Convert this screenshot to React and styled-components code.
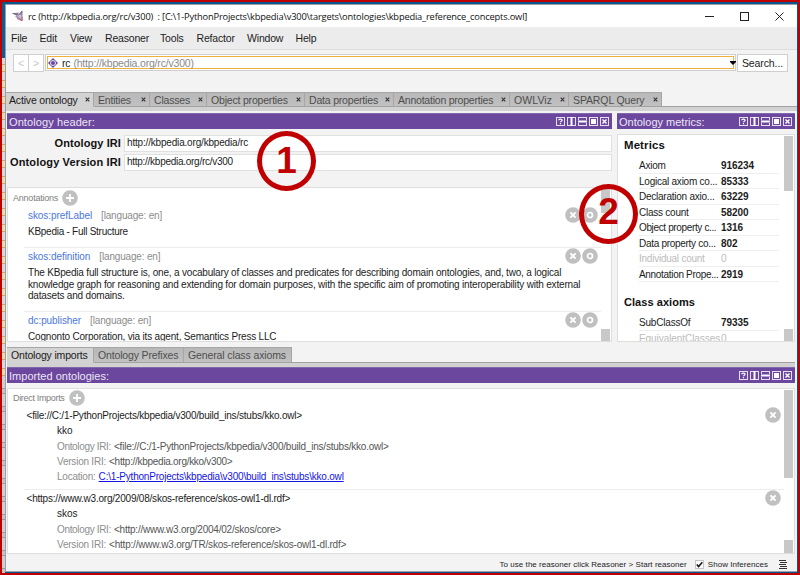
import React from "react";
import styled, { createGlobalStyle } from "styled-components";

const Global = createGlobalStyle`
  * { box-sizing: border-box; }
  body { margin: 0; font-family: "Liberation Sans", Arial, sans-serif; color: #1c1c1c; }
`;

const Frame = styled.div`
  position: relative;
  width: 800px;
  height: 575px;
  overflow: hidden;
  border: 2px solid #c00000;
  background: #0c548c;
  padding-top: 2px;
  display: flex;
`;
const Desktop = styled.div`
  width: 3px;
  height: 569px;
  display: flex;
  flex-direction: column;
`;
const DesktopBlue = styled.div`
  height: 54px;
  background: #0d5c96;
`;
const DesktopIcons = styled.div`
  height: 318px;
  background: repeating-linear-gradient(#dcdad6 0 6px, #c8aa74 6px 7px, #ecdcae 7px 13px, #cfa558 13px 14px, #d8d8d8 14px 16px);
`;
const DesktopText = styled.div`
  flex: 1;
  background: repeating-linear-gradient(#cfcfcf 0 12px, #9a9a9a 12px 13px, #c4c4c4 13px 17px, #999 17px 18px);
`;
const Window = styled.div`
  width: 792px;
  height: 568px;
  background: #f3f3f3;
  border: 1px solid #9aa0a8;
  border-right: 0;
  display: flex;
  flex-direction: column;
`;

const TitleBar = styled.div`
  height: 22px;
  background: #fff;
  display: flex;
  align-items: center;
  padding: 0 13px 0 6px;
`;
const TitleText = styled.div`
  font: 9.3px "Open Sans", sans-serif;
  letter-spacing: -0.18px;
  margin-left: 4px;
  white-space: pre;
  color: #111;
`;
const WindowButtons = styled.div`
  margin-left: auto;
  display: flex;
  gap: 26px;
`;
const MenuBar = styled.div`
  height: 23px;
  background: #ececec;
  border-bottom: 1px solid #dcdcdc;
  display: flex;
  align-items: center;
  padding-left: 5px;
`;
const MenuItem = styled.div`
  width: ${(p) => p.$w}px;
  font-size: 10.5px;
  letter-spacing: -0.18px;
  white-space: nowrap;
`;
const Toolbar = styled.div`
  height: 42px;
  padding: 4px 8px 0 7px;
  display: flex;
`;
const NavButton = styled.div`
  width: ${(p) => p.$w || 16}px;
  height: 18px;
  margin-right: ${(p) => p.$mr || 0}px;
  background: #fff;
  border: 1px solid #cfcfcf;
  color: ${(p) => (p.$dark ? "#222" : "#c8c8c8")};
  display: flex;
  align-items: center;
  justify-content: center;
  font-size: 10.5px;
  letter-spacing: -0.1px;
  & + & { margin-left: -1px; }
`;
const Combo = styled.div`
  width: 691px;
  height: 17px;
  margin-right: 1px;
  padding: 1px;
  background: #fff;
  border: 1px solid #cfcfcf;
`;
const ComboField = styled.div`
  width: 687px;
  height: 13px;
  border: 1px solid #f0b13c;
  display: flex;
  align-items: center;
  font-size: 10.5px;
  letter-spacing: -0.18px;
  color: #8a8a8a;
  b { font-weight: 400; color: #222; margin: 0 3px 0 4px; }
  svg:last-child { margin-left: auto; margin-right: -3px; }
`;

const TabStrip = styled.div`
  display: flex;
  height: ${(p) => p.$h}px;
  border-bottom: 4px solid #d2d2d2;
  position: relative;
`;
const TabRest = styled.div`
  flex: 1;
  border-bottom: 1px solid #a2a2a2;
`;
const TabBox = styled.div`
  width: ${(p) => p.$w}px;
  display: flex;
  align-items: center;
  justify-content: space-between;
  padding: 0 3px 0 ${(p) => p.$pl || 4}px;
  font-size: 10.5px;
  letter-spacing: ${(p) => (p.$ls || 0) - 0.22}px;
  white-space: nowrap;
  background: ${(p) => (p.$active ? "#d3d3d3" : "linear-gradient(#b8b8b8, #c1c1c1)")};
  color: ${(p) => (p.$active ? "#1a1a1a" : "#4e4e4e")};
  border: 1px solid #a6a6a6;
  border-left-width: 0;
  border-bottom-color: ${(p) => (p.$active ? "#d3d3d3" : "#a2a2a2")};
`;

const Main = styled.div`
  display: flex;
  gap: 5px;
  padding: 2px 0 0 1px;
  height: 231px;
`;
const Column = styled.div`
  width: ${(p) => p.$w}px;
  display: flex;
  flex-direction: column;
`;
const PanelHeader = styled.div`
  height: 16px;
  flex: none;
  background: #6b479e;
  border-top: 1px solid #8266ae;
  color: #ece6f5;
  font-size: 11px;
  letter-spacing: ${(p) => p.$ls || 0}px;
  display: flex;
  align-items: center;
  justify-content: space-between;
  padding: 0 3px 0 2px;
  white-space: nowrap;
`;
const HeaderButtons = styled.div`
  display: flex;
  gap: 2px;
`;
const IriForm = styled.div`
  height: 58px;
  padding-top: 5px;
  display: flex;
  flex-direction: column;
  gap: 1px;
`;
const IriRow = styled.div`
  display: flex;
  height: 18px;
  align-items: center;
`;
const IriLabel = styled.div`
  width: 114px;
  margin-right: 3px;
  text-align: right;
  font-size: 11px;
  font-weight: 700;
  letter-spacing: ${(p) => p.$ls}px;
  white-space: nowrap;
  color: #111;
`;
const IriInput = styled.div`
  flex: 1;
  height: 17px;
  line-height: 14px;
  border: 1px solid #e0e0e0;
  background: #fff;
  padding-left: 2px;
  font-size: 10px;
  letter-spacing: ${(p) => p.$ls - 0.22}px;
`;

const ScrollBox = styled.div`
  height: ${(p) => p.$h}px;
  flex: none;
  background: #fff;
  border: 1px solid #dedede;
  display: flex;
  overflow: hidden;
`;
const ScrollContent = styled.div`
  flex: 1;
  min-width: 0;
  overflow: hidden;
`;
const ScrollBar = styled.div`
  width: 10px;
  padding-top: 1px;
  display: flex;
  flex-direction: column;
  justify-content: space-between;
`;
const Thumb = styled.div`
  width: 9px;
  height: ${(p) => p.$h}px;
  background: #c8c8c8;
`;
const SectionLabel = styled.div`
  height: ${(p) => p.$h}px;
  margin-left: 5px;
  display: flex;
  align-items: center;
  gap: 4px;
  font-size: 9px;
  letter-spacing: ${(p) => (p.$ls || 0) - 0.22}px;
  color: #808080;
  svg { flex: none; }
`;
const Annotation = styled.div`
  height: ${(p) => p.$h}px;
  margin: 0 0 0 16px;
  padding-left: 4px;
  border-bottom: 1px solid #ededed;
`;
const AnnotationHead = styled.div`
  height: 16px;
  display: flex;
  align-items: center;
  font-size: 10px;
  white-space: nowrap;
`;
const Property = styled.span`
  color: #4c77e0;
  letter-spacing: -0.07px;
`;
const Lang = styled.span`
  color: #8c8c8c;
  margin-left: 9px;
  letter-spacing: -0.17px;
`;
const Actions = styled.div`
  margin-left: auto;
  margin-right: ${(p) => p.$mr}px;
  display: flex;
  gap: 1px;
`;
const Value = styled.div`
  margin-top: 3px;
  font-size: 10px;
  line-height: 11.65px;
  letter-spacing: ${(p) => (p.$ls || 0) - 0.22}px;
  white-space: pre;
`;

const MetricTitle = styled.div`
  height: 21px;
  line-height: 21px;
  margin: ${(p) => p.$mt || 0}px 0 2px 6px;
  font-size: ${(p) => p.$fs || 11}px;
  font-weight: 700;
  letter-spacing: ${(p) => p.$ls}px;
  color: #111;
`;
const MetricRow = styled.div`
  display: flex;
  height: 15.55px;
  line-height: 15.5px;
  width: 140px;
  margin-left: 21px;
  border-bottom: 1px solid #efefef;
  font-size: 10px;
  white-space: nowrap;
  color: ${(p) => (p.$off ? "#bcbcbc" : "#1c1c1c")};
`;
const MetricName = styled.div`
  width: 82px;
  letter-spacing: ${(p) => (p.$ls || 0) - 0.24}px;
`;
const MetricValue = styled.div`
  font-weight: ${(p) => (p.$off ? 400 : 700)};
  letter-spacing: -0.05px;
`;

const Imports = styled.div`
  padding-left: 1px;
  display: flex;
  flex-direction: column;
  width: 789px;
`;
const Gap = styled.div`
  height: 5px;
`;
const ImportItem = styled.div`
  height: 83px;
  margin-left: 16px;
  border-bottom: 1px solid #ededed;
  font-size: 10px;
  letter-spacing: -0.21px;
  white-space: nowrap;
`;
const ImportHead = styled.div`
  height: 16px;
  padding-left: 2.5px;
  display: flex;
  align-items: center;
`;
const ImportName = styled.div`
  height: 16px;
  line-height: 15px;
  padding-left: 33px;
  letter-spacing: 0;
`;
const ImportFact = styled.div`
  height: 15px;
  line-height: 15px;
  padding-left: 33px;
  display: flex;
  gap: 3px;
  color: #555;
`;
const FactLabel = styled.span`
  color: #8e8e8e;
  letter-spacing: ${(p) => (p.$ls || 0) - 0.22}px;
`;
const FactValue = styled.span`
  letter-spacing: ${(p) => (p.$ls || 0) - 0.22}px;
`;
const FileLink = styled.a`
  color: #1414e6;
  letter-spacing: -0.2px;
  text-decoration: underline;
`;

const StatusBar = styled.div`
  flex: 1;
  display: flex;
  align-items: center;
  justify-content: flex-end;
  padding-right: 10px;
  padding-top: 3px;
  font-size: 8px;
  letter-spacing: 0.04px;
  white-space: nowrap;
`;
const CheckBox = styled.div`
  width: 9px;
  height: 9px;
  margin: 0 4px 0 8px;
  background: #fff;
  border: 1px solid #c4c4c4;
  display: flex;
`;
const StatusText = styled.span`
  margin-right: ${(p) => p.$mr || 0}px;
`;

const Callout = styled.div`
  position: absolute;
  left: ${(p) => p.$x - 31.5}px;
  top: ${(p) => p.$y - 31.5}px;
  width: 59px;
  height: 60px;
  border: 5px solid #c00000;
  border-radius: 50%;
  color: #c00000;
  font-size: 37px;
  font-weight: 700;
  line-height: ${(p) => p.$lh}px;
  text-align: center;
`;

const CloseGlyph = () => (
  <svg width="5" height="5" viewBox="0 0 5 5" stroke="#333" strokeWidth="1.1"><path d="M.7.7l3.6 3.6M4.3.7L.7 4.3" /></svg>
);
const CircleIcon = ({ kind }) => (
  <svg width="16" height="16" viewBox="0 0 16 16" fill="none" stroke="#fff">
    <circle cx="8" cy="8" r="7.8" fill="#c0c0c0" stroke="none" />
    {kind === "add" && <path d="M8 4v8M4 8h8" strokeWidth="1.8" />}
    {kind === "x" && <path d="M5.4 5.4l5.2 5.2M10.6 5.4l-5.2 5.2" strokeWidth="1.9" />}
    {kind === "o" && <circle cx="8" cy="8" r="2.5" strokeWidth="1.7" />}
  </svg>
);
const ViewIcon = ({ kind }) => (
  <svg width="9" height="9" viewBox="0 0 9 9" fill="none" stroke="#e6def0">
    {kind === "row" ? (
      <path d="M0 .5h9M0 8.5h9M.5 0v3M8.5 0v3M.5 6v3M8.5 6v3" />
    ) : (
      <rect x=".5" y=".5" width="8" height="8" />
    )}
    {kind === "help" && <path d="M2.7 3.3c0-1.6 3.4-1.6 3.4 0 0 1-1.6.8-1.6 2M4.5 6v1.2" strokeWidth="1.2" stroke="#fff" />}
    {kind === "col" && <path d="M4.5 0v9" strokeWidth="2" stroke="#fff" />}
    {kind === "row" && <path d="M0 4.5h9" strokeWidth="2" stroke="#fff" />}
    {kind === "max" && <rect x="2.5" y="2.5" width="4" height="4" fill="#fff" stroke="#fff" />}
    {kind === "close" && <path d="M2.5 2.5l4 4M6.5 2.5l-4 4" strokeWidth="1.4" stroke="#fff" />}
  </svg>
);
const PanelBar = ({ title, ls }) => (
  <PanelHeader $ls={ls}>
    {title}
    <HeaderButtons>
      {["help", "col", "row", "max", "close"].map((k) => <ViewIcon key={k} kind={k} />)}
    </HeaderButtons>
  </PanelHeader>
);
const AppIcon = () => (
  <svg width="12" height="12" viewBox="0 0 12 12">
    <path d="M0 3.2L7 2.6 5.2 6z" fill="#85839a" />
    <path d="M6 4.8L10.4.4l-.6 5.4z" fill="#a98bb8" />
    <path d="M2.6 6.2L9.6 5.6l.6 5.2L5 8.6z" fill="#cbbccf" />
    <path d="M.6 3.3L7 5.4l3-4.4v9.6L4.4 6.3" fill="none" stroke="#66557a" strokeWidth=".7" />
    <path d="M5 8.5l5.2 2.3-.2-4" fill="none" stroke="#bd5674" strokeWidth=".8" />
  </svg>
);

const menus = [["File", 28.5], ["Edit", 30.5], ["View", 35], ["Reasoner", 55], ["Tools", 36.5], ["Refactor", 50.5], ["Window", 48.5], ["Help", 30]];
const tabs = [["Active ontology", 88, 0.05, 3], ["Entities", 56, 0.02], ["Classes", 57, 0.02], ["Object properties", 98, 0.03], ["Data properties", 89, 0.03], ["Annotation properties", 116, 0], ["OWLViz", 59, 0.3], ["SPARQL Query", 93, 0.1]];
const metrics = [["Axiom", "916234"], ["Logical axiom co...", "85333"], ["Declaration axio...", "63229"], ["Class count", "58200"], ["Object property c...", "1316", -0.12], ["Data property co...", "802", -0.05], ["Individual count", "0"], ["Annotation Prope...", "2919", -0.08]];
const classAxioms = [["SubClassOf", "79335", 0.05], ["EquivalentClasses", "0", 0.17]];
const annotations = [
  ["skos:prefLabel", 41, "KBpedia - Full Structure", -0.04],
  ["skos:definition", 64, "The KBpedia full structure is, one, a vocabulary of classes and predicates for describing domain ontologies, and, two, a logical\nknowledge graph for reasoning and extending for domain purposes, with the specific aim of promoting interoperability with external\ndatasets and domains.", 0.03],
  ["dc:publisher", 64, "Cognonto Corporation, via its agent, Semantics Press LLC", 0.03],
];
const imports = [
  { doc: "<file://C:/1-PythonProjects/kbpedia/v300/build_ins/stubs/kko.owl>", name: "kko", iri: "<file://C:/1-PythonProjects/kbpedia/v300/build_ins/stubs/kko.owl>", ver: "<http://kbpedia.org/kko/v300>", verLs: -0.07, loc: "C:\\1-PythonProjects\\kbpedia\\v300\\build_ins\\stubs\\kko.owl" },
  { doc: "<https://www.w3.org/2009/08/skos-reference/skos-owl1-dl.rdf>", name: "skos", iri: "<http://www.w3.org/2004/02/skos/core>", ver: "<http://www.w3.org/TR/skos-reference/skos-owl1-dl.rdf>", verLs: 0.01 },
];

const Metric = ({ name, value, ls }) => {
  const off = value === "0";
  return (
    <MetricRow $off={off}>
      <MetricName $ls={ls}>{name}</MetricName>
      <MetricValue $off={off}>{value}</MetricValue>
    </MetricRow>
  );
};

export default function App() {
  return (
    <Frame>
      <Global />
      <Desktop><DesktopBlue /><DesktopIcons /><DesktopText /></Desktop>
      <Window>
        <TitleBar>
          <AppIcon />
          <TitleText>{"rc (http://kbpedia.org/rc/v300)  : [C:\\1-PythonProjects\\kbpedia\\v300\\targets\\ontologies\\kbpedia_reference_concepts.owl]"}</TitleText>
          <WindowButtons>
            <svg width="9" height="9" stroke="#222"><path d="M0 4.5h9" /></svg>
            <svg width="9" height="9" stroke="#222" fill="none"><rect x=".5" y=".5" width="8" height="8" /></svg>
            <svg width="9" height="9" stroke="#222"><path d="M.5.5l8 8M8.5.5l-8 8" /></svg>
          </WindowButtons>
        </TitleBar>
        <MenuBar>{menus.map(([t, w]) => <MenuItem key={t} $w={w}>{t}</MenuItem>)}</MenuBar>
        <Toolbar>
          <NavButton>&lt;</NavButton>
          <NavButton $mr={1}>&gt;</NavButton>
          <Combo>
            <ComboField>
              <svg width="10" height="10" viewBox="0 0 10 10">
                <path d="M5 0l5 5-5 5-5-5z" fill="#6b479e" />
                <circle cx="5" cy="5" r="2.5" fill="#6b479e" stroke="#e9e2f4" strokeWidth="1" />
              </svg>
              <b>rc</b>(http://kbpedia.org/rc/v300)
              <svg width="6" height="4"><path d="M0 0h6v1L3 4 0 1z" fill="#000" /></svg>
            </ComboField>
          </Combo>
          <NavButton $w={51} $dark>Search...</NavButton>
        </Toolbar>
        <TabStrip $h={19}>
          {tabs.map(([t, w, ls, pl], i) => (
            <TabBox key={t} $w={w} $ls={ls} $pl={pl} $active={i === 0}>{t}<CloseGlyph /></TabBox>
          ))}
          <TabRest />
        </TabStrip>
        <Main>
          <Column $w={605}>
            <PanelBar title="Ontology header:" ls={0.1} />
            <IriForm>
              <IriRow><IriLabel $ls={0.09}>Ontology IRI</IriLabel><IriInput $ls={0.04}>http://kbpedia.org/kbpedia/rc</IriInput></IriRow>
              <IriRow><IriLabel $ls={0.14}>Ontology Version IRI</IriLabel><IriInput $ls={-0.05}>http://kbpedia.org/rc/v300</IriInput></IriRow>
            </IriForm>
            <ScrollBox $h={155}>
              <ScrollContent>
                <SectionLabel $h={19}>Annotations<CircleIcon kind="add" /></SectionLabel>
                {annotations.map(([p, h, v, ls]) => (
                  <Annotation key={p} $h={h}>
                    <AnnotationHead>
                      <Property>{p}</Property><Lang>[language: en]</Lang>
                      <Actions $mr={3}><CircleIcon kind="x" /><CircleIcon kind="o" /></Actions>
                    </AnnotationHead>
                    <Value $ls={ls}>{v}</Value>
                  </Annotation>
                ))}
              </ScrollContent>
              <ScrollBar><Thumb $h={24} /><Thumb $h={12} /></ScrollBar>
            </ScrollBox>
          </Column>
          <Column $w={178}>
            <PanelBar title="Ontology metrics:" />
            <Gap />
            <ScrollBox $h={208}>
              <ScrollContent>
                <MetricTitle $ls={0.15} $fs={11.4}>Metrics</MetricTitle>
                {metrics.map(([n, v, ls]) => <Metric key={n} name={n} value={v} ls={ls} />)}
                <MetricTitle $ls={0.05} $mt={10}>Class axioms</MetricTitle>
                {classAxioms.map(([n, v, ls]) => <Metric key={n} name={n} value={v} ls={ls} />)}
              </ScrollContent>
              <ScrollBar><Thumb $h={55} /><Thumb $h={12} /></ScrollBar>
            </ScrollBox>
          </Column>
        </Main>
        <Imports>
          <Gap />
          <TabStrip $h={20}>
            <TabBox $w={87} $ls={0.05} $active>Ontology imports</TabBox>
            <TabBox $w={90} $ls={0.07}>Ontology Prefixes</TabBox>
            <TabBox $w={108} $ls={0.1}>General class axioms</TabBox>
            <TabRest />
          </TabStrip>
          <PanelBar title="Imported ontologies:" ls={0.02} />
          <Gap />
          <ScrollBox $h={166}>
            <ScrollContent>
              <SectionLabel $h={18} $ls={-0.1}>Direct Imports<CircleIcon kind="add" /></SectionLabel>
              {imports.map((m) => (
                <ImportItem key={m.name}>
                  <ImportHead>{m.doc}<Actions $mr={3}><CircleIcon kind="x" /></Actions></ImportHead>
                  <ImportName>{m.name}</ImportName>
                  <ImportFact><FactLabel $ls={-0.12}>Ontology IRI:</FactLabel><FactValue>{m.iri}</FactValue></ImportFact>
                  <ImportFact><FactLabel>Version IRI:</FactLabel><FactValue $ls={m.verLs}>{m.ver}</FactValue></ImportFact>
                  {m.loc && <ImportFact><FactLabel>Location:</FactLabel><FileLink>{m.loc}</FileLink></ImportFact>}
                </ImportItem>
              ))}
            </ScrollContent>
            <ScrollBar><Thumb $h={88} /><Thumb $h={13} /></ScrollBar>
          </ScrollBox>
        </Imports>
        <StatusBar>
          <StatusText>To use the reasoner click Reasoner &gt; Start reasoner</StatusText>
          <CheckBox><svg width="7" height="7" fill="none" stroke="#111" strokeWidth="1.5"><path d="M.8 3.5l1.8 2L6.3 1.2" /></svg></CheckBox>
          <StatusText $mr={11}>Show Inferences</StatusText>
          <svg width="8" height="9" stroke="#333" strokeWidth="1.2"><path d="M0 .5h7M1 2.5h7M0 4.5h7M1 6.5h7M0 8.5h8" /></svg>
        </StatusBar>
      </Window>
      <Callout $x={286.5} $y={160.5} $lh={49}>1</Callout>
      <Callout $x={608.5} $y={213.5} $lh={46}>2</Callout>
    </Frame>
  );
}
